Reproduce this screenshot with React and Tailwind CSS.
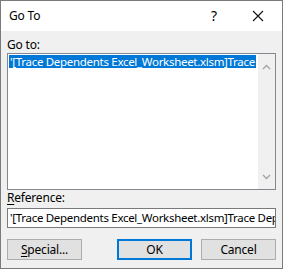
import React from "react";

const font = { fontFamily: '"Noto Sans", "Open Sans", sans-serif' };

const Chevron = ({ up }) => (
  <svg width="9" height="6" viewBox="0 0 9 6" className="block">
    <path
      d={up ? "M1 5 L4.5 1.5 L8 5" : "M1 1 L4.5 4.5 L8 1"}
      fill="none"
      stroke="#a3a3a3"
      strokeWidth="1.3"
    />
  </svg>
);

export default function App() {
  return (
    <div
      className="w-[283px] h-[269px] border border-[#7b7b7b] bg-[#f0f0f0] flex flex-col text-[12px] text-black overflow-hidden tracking-[-0.2px]"
      style={font}
    >
      {/* Title bar */}
      <div className="h-[30px] bg-white flex items-center shrink-0">
        <span className="pl-[8px] text-[12px]">Go To</span>
        <span className="ml-auto mr-[35px] text-[14px] leading-none">?</span>
        <svg width="12" height="12" viewBox="0 0 12 12" className="mr-[18px]">
          <path d="M1 1 L11 11 M11 1 L1 11" stroke="#111" strokeWidth="1.1" />
        </svg>
      </div>

      {/* Body */}
      <div className="px-[6px] flex flex-col">
        <div className="pt-[7px] leading-[14px] mb-[1px]">Go to:</div>

        <div className="h-[137px] border border-[#828790] bg-white flex">
          <div className="flex-1 min-w-0 pt-[1px] pl-[1px]">
            <div className="h-[13px] leading-[13px] bg-[#0078d7] text-white text-[11.5px] tracking-[-0.3px] pl-[1px] pr-[1px] w-fit max-w-full whitespace-nowrap overflow-hidden outline outline-1 outline-dotted outline-[#ffffff]">
              '[Trace Dependents Excel_Worksheet.xlsm]Trace
            </div>
          </div>
          <div className="w-[17px] shrink-0 bg-[#f0f0f0] flex flex-col items-center justify-between pt-[10px] pb-[9px]">
            <Chevron up />
            <Chevron />
          </div>
        </div>

        <div className="mt-[1px] leading-[14px]">
          <span className="underline underline-offset-2">R</span>eference:
        </div>

        <div className="mt-[3px] h-[20px] border border-[#7a7a7a] bg-white leading-[18px] pl-[2px] text-[11.5px] tracking-[-0.3px] whitespace-nowrap overflow-hidden">
          '[Trace Dependents Excel_Worksheet.xlsm]Trace Dependents
        </div>

        <div className="mt-[11px] flex h-[21px]">
          <button className="w-[75px] h-[21px] border border-[#adadad] bg-[#e1e1e1] leading-[19px]">
            <span className="underline underline-offset-2">S</span>pecial...
          </button>
          <button className="ml-[35px] w-[75px] h-[21px] border-2 border-[#0078d7] bg-[#e1e1e1] leading-[17px]">
            OK
          </button>
          <button className="ml-[9px] w-[75px] h-[21px] border border-[#adadad] bg-[#e1e1e1] leading-[19px]">
            Cancel
          </button>
        </div>
      </div>
    </div>
  );
}
